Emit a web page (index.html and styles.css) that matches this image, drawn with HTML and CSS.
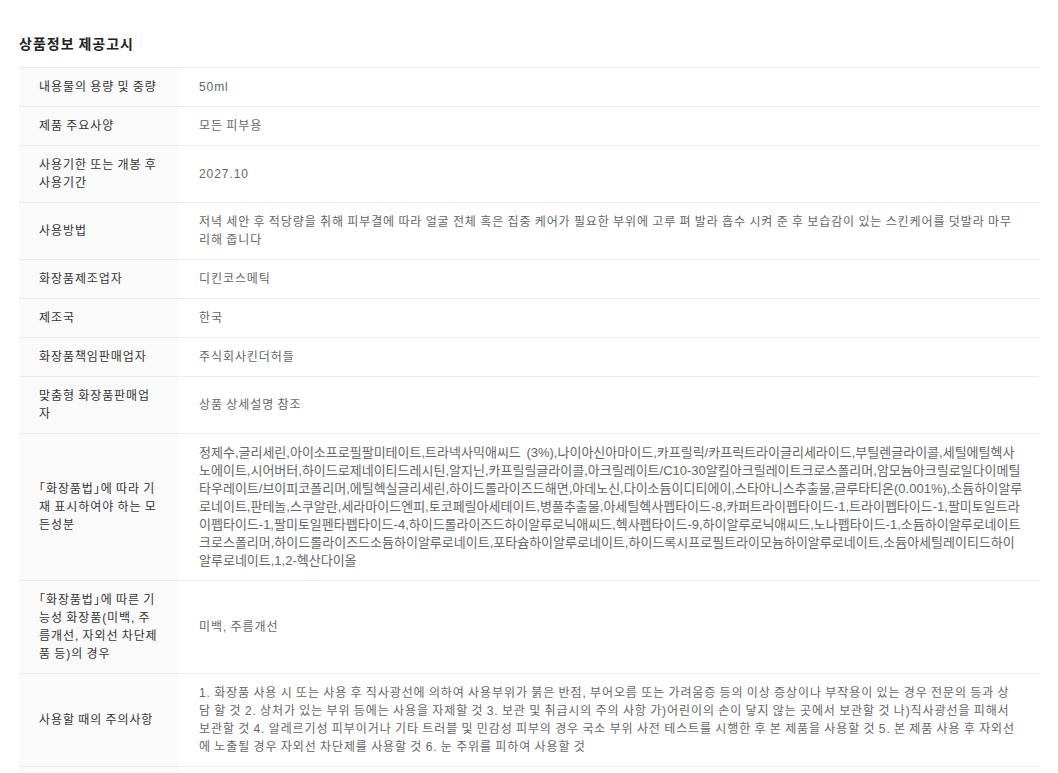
FILE: index.html
```html
<!DOCTYPE html>
<html lang="ko">
<head>
    <meta charset="UTF-8">
    <meta name="viewport" content="width=device-width, initial-scale=1.0">
    <title>상품정보 제공고시</title>
    <link rel="stylesheet" href="styles.css">
</head>
<body>
    <div class="notice">
        <h2 class="notice-title">상품정보 제공고시</h2>

        <table class="notice-table">
            <tr>
                <th>내용물의 용량 및 중량</th>
                <td>50ml</td>
            </tr>
            <tr>
                <th>제품 주요사양</th>
                <td>모든 피부용</td>
            </tr>
            <tr>
                <th>사용기한 또는 개봉 후 사용기간</th>
                <td>2027.10</td>
            </tr>
            <tr>
                <th>사용방법</th>
                <td>저녁 세안 후 적당량을 취해 피부결에 따라 얼굴 전체 혹은 집중 케어가 필요한 부위에 고루 펴 발라 흡수 시켜 준 후 보습감이 있는 스킨케어를 덧발라 마무리해 줍니다</td>
            </tr>
            <tr>
                <th>화장품제조업자</th>
                <td>디킨코스메틱</td>
            </tr>
            <tr>
                <th>제조국</th>
                <td>한국</td>
            </tr>
            <tr>
                <th>화장품책임판매업자</th>
                <td>주식회사킨더허들</td>
            </tr>
            <tr>
                <th>맞춤형 화장품판매업자</th>
                <td>상품 상세설명 참조</td>
            </tr>
            <tr>
                <th>「화장품법」에 따라 기재 표시하여야 하는 모든성분</th>
                <td class="ingredients">정제수,글리세린,아이소프로필팔미테이트,트라넥사믹애씨드 (3%),나이아신아마이드,카프릴릭/카프릭트라이글리세라이드,부틸렌글라이콜,세틸에틸헥사노에이트,시어버터,하이드로제네이티드레시틴,알지닌,카프릴릴글라이콜,아크릴레이트/C10-30알킬아크릴레이트크로스폴리머,암모늄아크릴로일다이메틸타우레이트/브이피코폴리머,에틸헥실글리세린,하이드롤라이즈드해면,아데노신,다이소듐이디티에이,스타아니스추출물,글루타티온(0.001%),소듐하이알루로네이트,판테놀,스쿠알란,세라마이드엔피,토코페릴아세테이트,병풀추출물,아세틸헥사펩타이드-8,카퍼트라이펩타이드-1,트라이펩타이드-1,팔미토일트라이펩타이드-1,팔미토일펜타펩타이드-4,하이드롤라이즈드하이알루로닉애씨드,헥사펩타이드-9,하이알루로닉애씨드,노나펩타이드-1,소듐하이알루로네이트크로스폴리머,하이드롤라이즈드소듐하이알루로네이트,포타슘하이알루로네이트,하이드록시프로필트라이모늄하이알루로네이트,소듐아세틸레이티드하이알루로네이트,1,2-헥산다이올</td>
            </tr>
            <tr>
                <th>「화장품법」에 따른 기능성 화장품(미백, 주름개선, 자외선 차단제품 등)의 경우</th>
                <td>미백, 주름개선</td>
            </tr>
            <tr>
                <th>사용할 때의 주의사항</th>
                <td>1. 화장품 사용 시 또는 사용 후 직사광선에 의하여 사용부위가 붉은 반점, 부어오름 또는 가려움증 등의 이상 증상이나 부작용이 있는 경우 전문의 등과 상담 할 것 2. 상처가 있는 부위 등에는 사용을 자제할 것 3. 보관 및 취급시의 주의 사항 가)어린이의 손이 닿지 않는 곳에서 보관할 것 나)직사광선을 피해서 보관할 것 4. 알레르기성 피부이거나 기타 트러블 및 민감성 피부의 경우 국소 부위 사전 테스트를 시행한 후 본 제품을 사용할 것 5. 본 제품 사용 후 자외선에 노출될 경우 자외선 차단제를 사용할 것 6. 눈 주위를 피하여 사용할 것</td>
            </tr>
            <tr>
                <th>품질보증기준</th>
                <td>본 제품에 이상이 있을 경우 공정거래위원회 고시 소비자분쟁해결기준에 의해 보상받을 수 있습니다.</td>
            </tr>
        </table>
    </div>
</body>
</html>
```

FILE: styles.css
```css
body {
    margin: 0;
    background: #fff;
    font-family: "Liberation Sans", "Noto Sans CJK KR", sans-serif;
    color: #333;
}

.notice {
    padding: 34px 19px 0;
}

.notice-title {
    margin: 0 0 13px;
    font-size: 14px;
    line-height: 20px;
    font-weight: 700;
    letter-spacing: 1px;
    word-spacing: -1px;
    color: #222;
}

.notice-table {
    width: 100%;
    border-collapse: collapse;
    border-top: 1px solid #ebebeb;
    font-size: 12px;
    line-height: 18px;
    letter-spacing: 0.92px;
    word-spacing: -0.92px;
}

.notice-table tr {
    border-bottom: 1px solid #ebebeb;
}

.notice-table th {
    width: 120px;
    padding: 10px 20px;
    background: #fafafa;
    color: #333;
    font-weight: 400;
    font-feature-settings: "halt";
    text-align: left;
    vertical-align: middle;
}

.notice-table td {
    padding: 10px 20px;
    color: #666;
    vertical-align: middle;
}

/* long comma list: keep latin chars at their own width */
.notice-table td.ingredients {
    padding-right: 16.2px;
    font-size: 13px;
    letter-spacing: 0;
    word-spacing: 2px;
}
```
